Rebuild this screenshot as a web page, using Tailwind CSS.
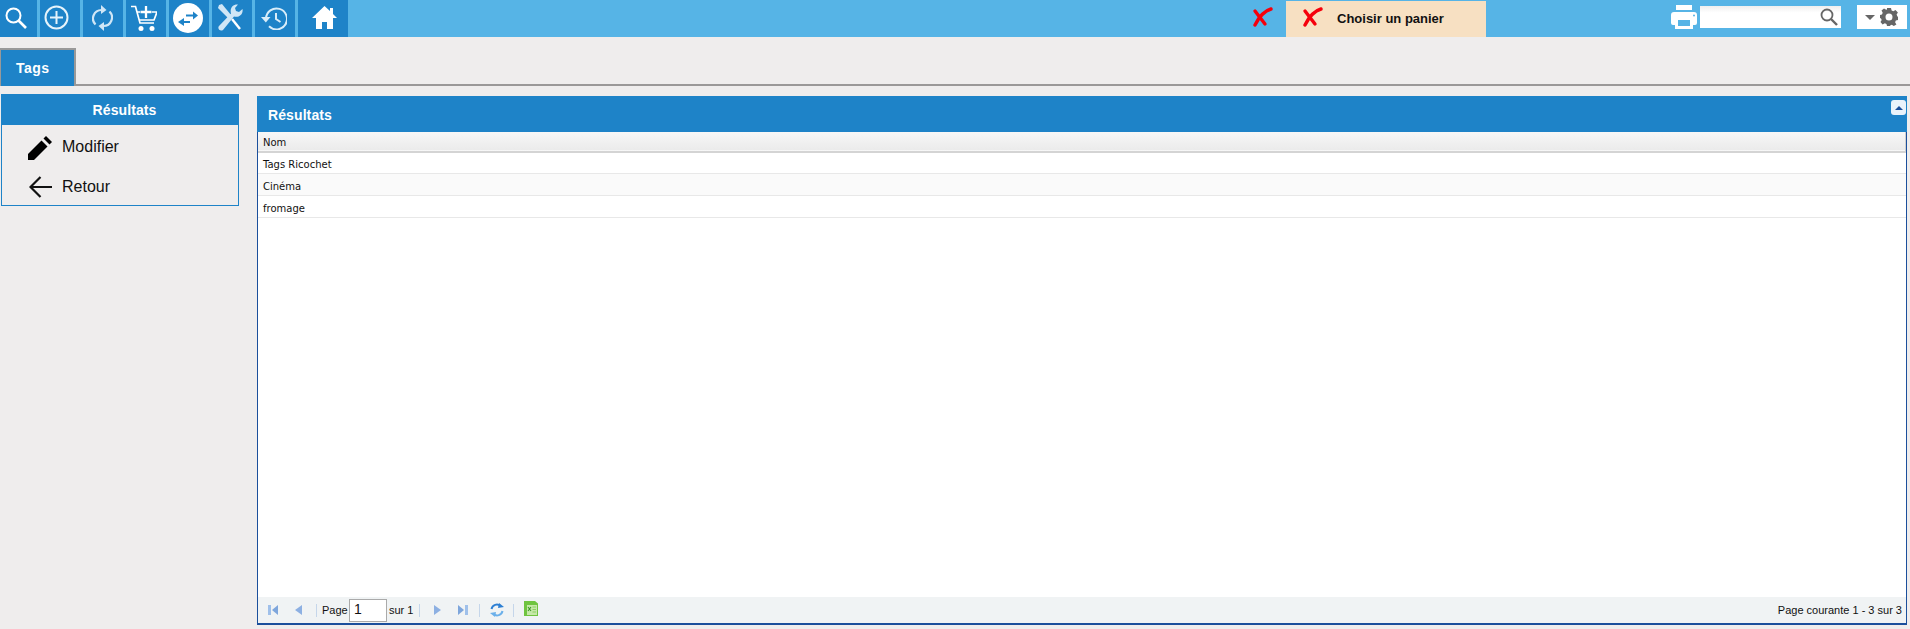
<!DOCTYPE html>
<html lang="fr">
<head>
  <meta charset="UTF-8" />
  <title>Tags</title>
  <script src="https://cdn.jsdelivr.net/npm/@tailwindcss/browser@4"></script>
</head>
<body class="bg-[#efeded] font-['Liberation_Sans',Arial,sans-serif] overflow-hidden">
  <div class="w-[1910px] h-[629px] flex flex-col">

    <!-- barre du haut -->
    <header class="h-[37px] bg-[#56b4e6] flex shrink-0">
      <nav class="flex gap-[3px]">
        <a class="w-[37px] h-[37px] bg-[#1e83c8] pl-[5px] pt-[7px]">
          <svg width="22" height="22" viewBox="0 0 22 22" fill="none" stroke="#fff"><circle cx="8.500" cy="8.500" r="7" stroke-width="2"/><path d="M13.500 13.500l7.500 7.500" stroke-width="2.600"/></svg>
        </a>
        <a class="w-[40px] h-[37px] bg-[#1e83c8] pl-[4px] pt-[5px]">
          <svg width="25" height="25" viewBox="0 0 25 25" fill="none" stroke="#e6f3fb" stroke-width="2"><circle cx="12.500" cy="12.500" r="11"/><path d="M12.500 6v13M6 12.500h13"/></svg>
        </a>
        <a class="w-[40px] h-[37px] bg-[#1e83c8] pl-[9px] pt-[5px]">
          <svg width="21" height="26" viewBox="0 0 21 26" fill="none" stroke="#cfe6f6" stroke-width="2.200"><path d="M3.500 19.500A8.500 8.500 0 0 1 9.500 5"/><path d="M17.500 6.500A8.500 8.500 0 0 1 11.500 21"/><path d="M9 0l5.500 5-5.500 4z" fill="#cfe6f6" stroke="none"/><path d="M12 26l-5.500-5 5.500-4z" fill="#cfe6f6" stroke="none"/></svg>
        </a>
        <a class="w-[40px] h-[37px] bg-[#1e83c8] pl-[5px] pt-[5px]">
          <svg width="26" height="26" viewBox="0 0 26 26" fill="none" stroke="#fff" stroke-width="1.700"><path d="M0 1.500h4.500L9 18h14"/><path d="M6 7h3M21 7h5l-3 8H8"/><path d="M15 1v12M9.500 7h11" stroke-width="2.300"/><circle cx="10" cy="23.500" r="2.500" fill="#fff" stroke="none"/><circle cx="21" cy="23.500" r="2.500" fill="#fff" stroke="none"/></svg>
        </a>
        <a class="w-[40px] h-[37px] bg-[#1e83c8] pl-[4px] pt-[3px]">
          <svg width="30" height="30" viewBox="0 0 30 30"><circle cx="15" cy="15" r="15" fill="#fff"/><path d="M13 12.500h8" stroke="#1e83c8" stroke-width="2"/><path d="M20 8.500l5 4-5 4z" fill="#1e83c8"/><path d="M17 19H10" stroke="#1e83c8" stroke-width="2"/><path d="M11 15l-6 4 6 4z" fill="#1e83c8"/></svg>
        </a>
        <a class="w-[40px] h-[37px] bg-[#1e83c8] pl-[5px] pt-[4px]">
          <svg width="27" height="27" viewBox="0 0 27 27" fill="none"><path d="M2 1l3-1 9 11-3 3L1 4z" fill="#cfe6f6"/><path d="M15 15l8 10" stroke="#fff" stroke-width="2.400"/><path d="M2 22L14 9.500C12.500 4 16 0 21 .5L18 4l1 3 3 1 3.500-3c1 5-3.500 9-8.500 7.500L6 26c-3 2-6-1.500-4-4z" fill="#cfe6f6"/></svg>
        </a>
        <a class="w-[40px] h-[37px] bg-[#1e83c8] pl-[6px] pt-[7px]">
          <svg width="26" height="23" viewBox="0 0 26 23" fill="none" stroke="#d9edf9" stroke-width="2"><path d="M5 11.500a10.500 10.500 0 1 1 3 7.800"/><path d="M0 10h9.500l-4.700 5.500z" fill="#d9edf9" stroke="none"/><path d="M15 6v6l4.500 3"/></svg>
        </a>
        <a class="w-[50px] h-[37px] bg-[#1e83c8] pl-[14px] pt-[6px]">
          <svg width="25" height="23" viewBox="0 0 25 23" fill="#fff"><path d="M12.500 0L0 12h4v11h6v-7h5v7h6V12h4l-4-4V2h-3v3z"/></svg>
        </a>
      </nav>

      <div class="ml-[904px] w-[34px] h-[37px] pt-[7px]">
        <svg width="21" height="20" viewBox="0 0 21 20" fill="none" stroke="#f5000c" stroke-width="3.400" stroke-linecap="round"><path d="M3 4l10 13"/><path d="M3 18C7 10 12 4 19 2"/></svg>
      </div>
      <div class="w-[200px] h-[36px] mt-[1px] bg-[#f7e0c2] flex items-center">
        <svg width="21" height="20" viewBox="0 0 21 20" fill="none" stroke="#f5000c" stroke-width="3.400" stroke-linecap="round" class="ml-[16px] mb-[4px]"><path d="M3 4l10 13"/><path d="M3 18C7 10 12 4 19 2"/></svg>
        <span class="ml-[14px] text-[13px] font-bold text-[#111] mb-[1px]">Choisir un panier</span>
      </div>

      <svg width="26" height="24" viewBox="0 0 26 24" class="ml-[185px] mt-[5px]"><path d="M5 0h16v5H5z" fill="#fff"/><path d="M3 7h20a3 3 0 0 1 3 3v8a2 2 0 0 1-2 2h-2v4H4v-4H2a2 2 0 0 1-2-2v-8a3 3 0 0 1 3-3z" fill="#fff"/><path d="M7 15h12v6H7z" fill="#56b4e6"/><circle cx="23" cy="10.500" r="1" fill="#56b4e6"/></svg>
      <div class="ml-[3px] mt-[6px] w-[141px] h-[22px] bg-white flex items-center justify-end pr-[3px] bg-gradient-to-b from-[#eeeeee] to-white to-[30%]">
        <svg width="18" height="18" viewBox="0 0 18 18" fill="none" stroke="#666"><circle cx="7" cy="7" r="5.500" stroke-width="1.800"/><path d="M11 11l6 6" stroke-width="2.400"/></svg>
      </div>
      <div class="ml-[16px] mt-[5px] w-[50px] h-[24px] bg-white flex items-center pl-[8px] gap-[5px]">
        <span class="w-0 h-0 border-x-[5px] border-x-transparent border-t-[5px] border-t-[#666]"></span>
        <svg width="18" height="18" viewBox="0 0 18 18" fill="#666"><path fill-rule="evenodd" d="M7 0h4l.6 2.500 1.700.7 2.200-1.300 2.400 2.600-1.300 2.100.7 1.700L18 9v3l-2.200.6-.7 1.700 1.300 2.200-2.600 1.500-2-1.200-1.300.5L10 18H7l-.5-2-1.700-.7-2.200 1.200L.5 14l1.200-2L1 10.500 0 10V7l2-.5.7-1.700L1.500 2.600 4 .5l2.200 1.300L7 1.500zM9 5.500a3.500 3.500 0 1 0 0 7 3.500 3.500 0 0 0 0-7z"/></svg>
      </div>
    </header>

    <!-- onglets -->
    <div class="h-[49px] shrink-0 pt-[11px] border-b-2 border-[#9a9898] flex">
      <div class="w-[76px] h-[38px] -mb-[2px] bg-[#1e83c8] border-t-2 border-r-2 border-l border-[#999] text-white font-bold text-[14px] tracking-[0.5px] flex items-center pl-[15px] pt-[1px]">Tags</div>
    </div>

    <main class="flex-1 flex items-start pl-[1px] pt-[8px] pb-[4px] min-h-0">
      <!-- panneau gauche -->
      <aside class="w-[238px] h-[112px] border border-[#1e83c8] shrink-0">
        <h2 class="h-[30px] bg-[#1e83c8] text-white font-bold text-[14px] tracking-[0.1px] flex items-center justify-center pl-[9px]">Résultats</h2>
        <a class="h-[43px] flex items-center pl-[26px] text-[16px] text-[#111]">
          <svg width="24" height="24" viewBox="0 0 24 24" fill="#000" class="mt-[2px]"><path d="M0 24v-6L13.500 4.500l6 6L6 24z"/><path d="M15.500 2.500L18 0l6 6-2.500 2.500z"/></svg>
          <span class="ml-[10px]">Modifier</span>
        </a>
        <a class="h-[37px] flex items-center pl-[27px] text-[16px] text-[#111]">
          <svg width="23" height="22" viewBox="0 0 23 22" fill="none" stroke="#111" stroke-width="2.200"><path d="M23 11H2M11.500 1L1.500 11l10 10"/></svg>
          <span class="ml-[10px]">Retour</span>
        </a>
      </aside>

      <!-- panneau résultats -->
      <section class="ml-[18px] mt-[2px] w-[1650px] h-[529px] border-x border-b-2 border-[#1b4f9c] flex flex-col bg-white">
        <div class="h-[36px] bg-[#1e83c8] flex items-center justify-between pl-[11px] text-white font-bold text-[14px] tracking-[0.1px] -mx-[1px] pr-[1px] shrink-0">
          <span class="pt-[3px]">Résultats</span>
          <span class="w-[15px] h-[15px] bg-[#eaf3fb] rounded-[3px] mb-[13px] flex items-center justify-center">
            <span class="w-0 h-0 border-x-[4px] border-x-transparent border-b-[4px] border-b-[#1b4f9c]"></span>
          </span>
        </div>
        <table class="w-full text-[10px] font-['DejaVu_Sans',sans-serif] text-[#111] border-collapse">
          <thead>
            <tr class="h-[20px] bg-gradient-to-b from-[#f7f7f7] to-[#ebebeb] border-b-2 border-[#d4d4d4]">
              <th class="font-normal text-left pl-[5px] pt-[1px] border-r border-[#cfcfcf]">Nom</th>
            </tr>
          </thead>
          <tbody>
            <tr class="h-[21px] border-b border-[#e8e8e8]"><td class="pl-[5px] pt-[4px]">Tags Ricochet</td></tr>
            <tr class="h-[22px] border-b border-[#e8e8e8] bg-[#fafafa]"><td class="pl-[5px] pt-[4px]">Cinéma</td></tr>
            <tr class="h-[22px] border-b border-[#e8e8e8]"><td class="pl-[5px] pt-[4px]">fromage</td></tr>
          </tbody>
        </table>
        <div class="mt-auto h-[26px] bg-[#f0f3f4] flex items-center text-[11px] text-[#111] pl-[10px] pr-[4px] shrink-0">
          <svg width="10" height="12" viewBox="0 0 10 12" class="shrink-0"><path d="M0 1h3v10H0z" fill="#9fc0ea"/><path d="M10 1v10L4 6z" fill="#7ea6dc"/></svg>
          <svg width="7" height="12" viewBox="0 0 7 12" class="ml-[17px] shrink-0"><path d="M7 1v10L0 6z" fill="#8db0e2"/></svg>
          <span class="ml-[14px] w-px h-[13px] bg-[#c5d6ea]"></span>
          <span class="ml-[5px] w-[26px]">Page</span>
          <span class="ml-[1px] w-[38px] h-[23px] border border-[#aaa] bg-white text-[14px] pl-[4px] leading-[19px]">1</span>
          <span class="ml-[2px] w-[25px]">sur 1</span>
          <span class="ml-[5px] w-px h-[13px] bg-[#c5d6ea]"></span>
          <svg width="7" height="12" viewBox="0 0 7 12" class="ml-[14px] shrink-0"><path d="M0 1v10l7-5z" fill="#8db0e2"/></svg>
          <svg width="10" height="12" viewBox="0 0 10 12" class="ml-[17px] shrink-0"><path d="M0 1v10l6-5z" fill="#7ea6dc"/><path d="M7 1h3v10H7z" fill="#9fc0ea"/></svg>
          <span class="ml-[11px] w-px h-[13px] bg-[#c5d6ea]"></span>
          <svg width="14" height="14" viewBox="0 0 14 14" fill="none" stroke-width="2" class="ml-[10px] shrink-0"><path d="M1.500 6a5.500 5.500 0 0 1 9-3" stroke="#2d7fd3"/><path d="M12.500 8a5.500 5.500 0 0 1-9 3" stroke="#6bb0ea"/><path d="M9 0l5 4-6 1z" fill="#2d7fd3"/><path d="M5 14L0 10l6-1z" fill="#6bb0ea"/></svg>
          <span class="ml-[9px] w-px h-[13px] bg-[#c5d6ea]"></span>
          <svg width="16" height="17" viewBox="0 0 16 17" class="ml-[9px] mb-[3px] shrink-0"><path d="M1 1h11l3 2.500V16H1z" fill="#6fc43f"/><path d="M4 5h10v10H4z" fill="#c6e8a9"/><path d="M5 7l3 4M8 7l-3 4" stroke="#3a9a25" stroke-width="1.100"/><path d="M9.500 7h3.500M9.500 9.500h3.500M9.500 12h3.500" stroke="#8ccf62"/></svg>
          <span class="ml-auto">Page courante 1 - 3 sur 3</span>
        </div>
      </section>
    </main>
  </div>
</body>
</html>
